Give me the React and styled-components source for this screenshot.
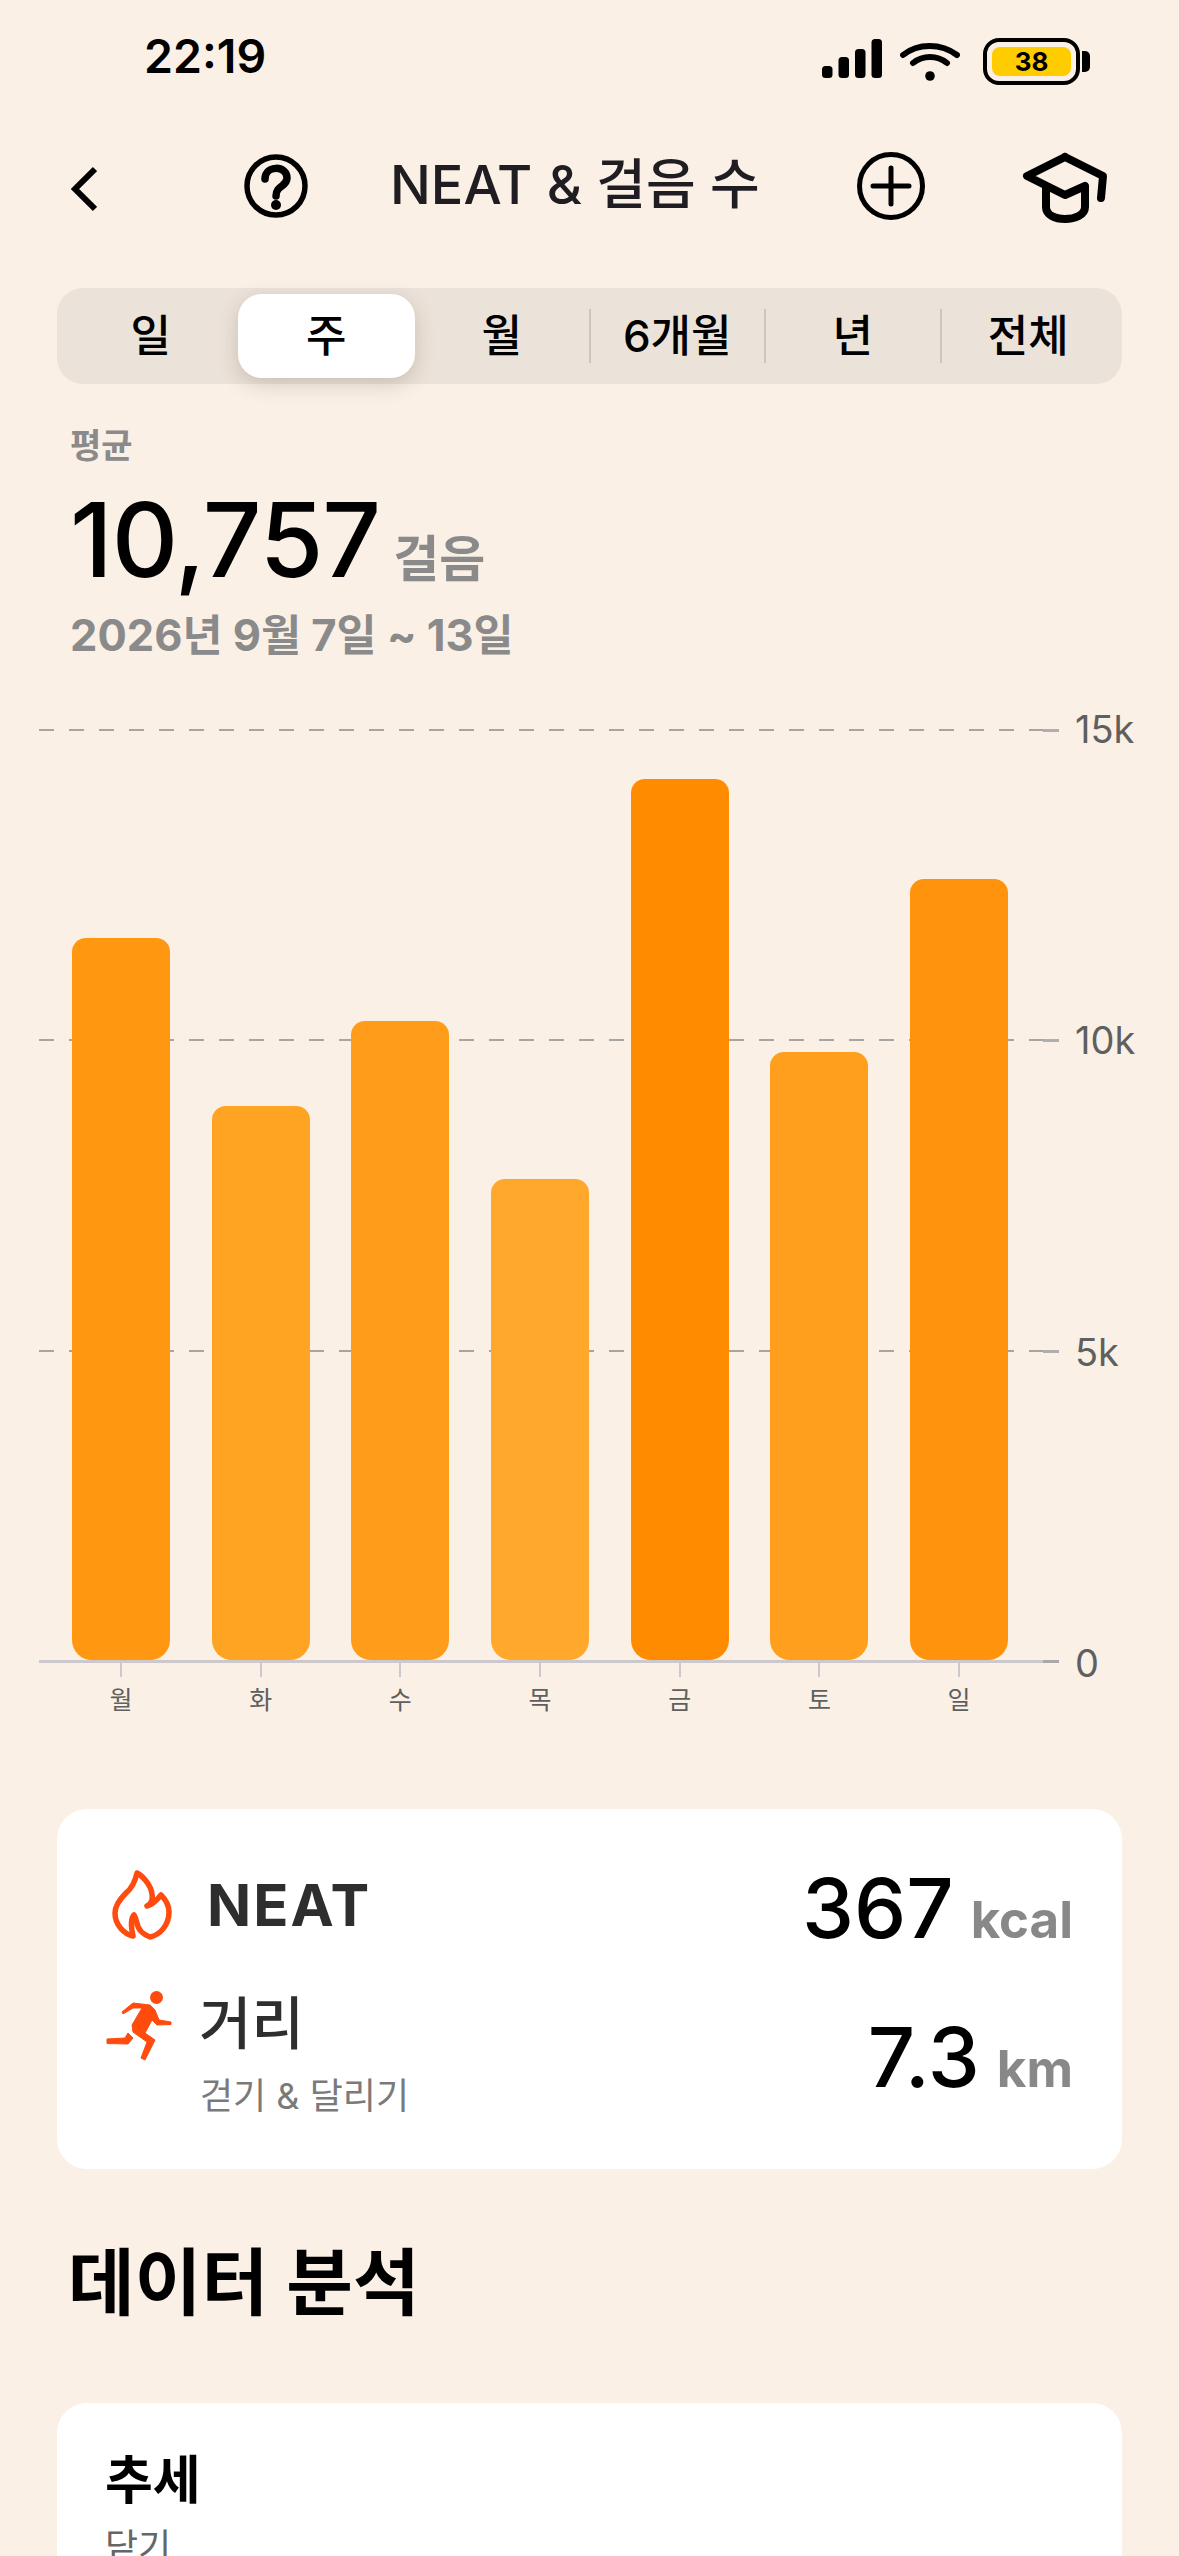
import React from 'react';
import styled, { createGlobalStyle } from 'styled-components';

const GlobalStyle = createGlobalStyle`
    html, body {
        margin: 0;
        padding: 0;
        background: #faf0e6;
    }
    * {
        box-sizing: border-box;
    }
`;

const tabs = ['일', '주', '월', '6개월', '년', '전체'];
const yLabels = ['15k', '10k', '5k', '0'];
const steps = [
    { day: '월', value: 11633 },
    { day: '화', value: 8926 },
    { day: '수', value: 10295 },
    { day: '목', value: 7750 },
    { day: '금', value: 14195 },
    { day: '토', value: 9796 },
    { day: '일', value: 12583 },
];

// 값이 클수록 진한 주황색
function barColor(value) {
    const t = (value - 7750) / (14195 - 7750);
    return `rgb(255, ${Math.round(168 - t * 28)}, ${Math.round(43 - t * 43)})`;
}

function App() {
    return (
        <Page>
            <GlobalStyle />
            <StatusBar>
                <Clock>22:19</Clock>
                <StatusIcons>
                    <svg width="60" height="40" viewBox="0 0 60 40">
                        <rect x="0" y="27" width="10.5" height="12" rx="3.5" fill="#000" />
                        <rect x="16.5" y="18" width="10.5" height="21" rx="3.5" fill="#000" />
                        <rect x="33" y="10" width="10.5" height="29" rx="3.5" fill="#000" />
                        <rect x="49.5" y="0" width="10.5" height="39" rx="3.5" fill="#000" />
                    </svg>
                    <svg width="60" height="40" viewBox="0 0 60 40">
                        <path d="M3 13 C18 1 41 1 57 13" fill="none" stroke="#000" strokeWidth="6" strokeLinecap="round" />
                        <path d="M13 21 C23 13 37 13 47 21" fill="none" stroke="#000" strokeWidth="6" strokeLinecap="round" />
                        <circle cx="30" cy="34" r="4.8" fill="#000" />
                    </svg>
                    <Battery>
                        <BatteryFill>38</BatteryFill>
                        <BatteryCap />
                    </Battery>
                </StatusIcons>
            </StatusBar>

            <NavBar>
                <BackIcon width="26" height="46" viewBox="0 0 26 46">
                    <path d="M24 3 L4 23 L24 43" fill="none" stroke="#000" strokeWidth="6" />
                </BackIcon>
                <HelpIcon width="64" height="64" viewBox="0 0 64 64">
                    <circle cx="32" cy="32" r="29" fill="none" stroke="#000" strokeWidth="5.5" />
                    <path d="M21 25 C21 11 43 11 43 24 C43 33 32 31 32 42" fill="none" stroke="#000" strokeWidth="7.5" strokeLinecap="round" />
                    <circle cx="32" cy="51" r="5" fill="#000" />
                </HelpIcon>
                <NavTitle>NEAT &amp; 걸음 수</NavTitle>
                <PlusIcon width="68" height="68" viewBox="0 0 68 68">
                    <circle cx="34" cy="34" r="31.5" fill="none" stroke="#000" strokeWidth="5" />
                    <path d="M16 34 H52 M34 16 V52" fill="none" stroke="#000" strokeWidth="5" strokeLinecap="round" />
                </PlusIcon>
                <CapIcon width="100" height="90" viewBox="0 0 100 90">
                    <path
                        d="M50 14 L12 33 L50 52 L70 43 V64 C70 72 60 76 50 76 C40 76 31 72 31 64 V45 M50 14 L88 33 L86 55"
                        fill="none"
                        stroke="#000"
                        strokeWidth="8"
                        strokeLinecap="round"
                        strokeLinejoin="round"
                    />
                </CapIcon>
            </NavBar>

            <Segments>
                {tabs.map((tab, idx) => (
                    <Segment key={tab} $active={idx === 1} $divider={idx >= 3}>{tab}</Segment>
                ))}
            </Segments>

            <Summary>
                <SummaryLabel>평균</SummaryLabel>
                <SummaryValue>
                    <BigNumber>10,757</BigNumber>
                    <BigUnit>걸음</BigUnit>
                </SummaryValue>
                <DateRange>2026년 9월 7일 ~ 13일</DateRange>
            </Summary>

            <Chart>
                <Plot>
                    <GridLayer>
                        <GridRow><DashLine /><AxisTick /></GridRow>
                        <GridRow><DashLine /><AxisTick /></GridRow>
                        <GridRow><DashLine /><AxisTick /></GridRow>
                    </GridLayer>
                    <Bars>
                        {steps.map(el => (
                            <Bar
                                key={el.day}
                                style={{
                                    height: `${(el.value / 15000) * 931}px`,
                                    background: barColor(el.value),
                                }}
                            />
                        ))}
                    </Bars>
                    <BaseEnd />
                </Plot>
                <YAxis>
                    {yLabels.map(el => <YLabel key={el}>{el}</YLabel>)}
                </YAxis>
                <XAxis>
                    {steps.map(el => (
                        <XItem key={el.day}>
                            <XTick />
                            <XLabel>{el.day}</XLabel>
                        </XItem>
                    ))}
                </XAxis>
            </Chart>

            <Card>
                <MetricRow>
                    <svg width="80" height="90" viewBox="0 0 80 90">
                        <path
                            d="M37 13 C44 17 54 28 52 40 C51 43 49 45 47 46 C52 45 57 40 61 35 C66 40 69 45 69 52 C69 65 60 75 50 77 C44 75 38 70 37 63 C36 60 35 56 34 55 C32 57 30 62 33 76 C24 74 15 65 15 53 C15 45 20 39 26 33 C31 29 35 22 37 13 Z"
                            fill="none"
                            stroke="#ff4b0e"
                            strokeWidth="5.5"
                            strokeLinejoin="round"
                        />
                    </svg>
                    <NeatName>NEAT</NeatName>
                    <MetricValue $top={5}>
                        <MetricNumber>367</MetricNumber>
                        <MetricUnit>kcal</MetricUnit>
                    </MetricValue>
                </MetricRow>
                <DistanceRow>
                    <svg width="80" height="80" viewBox="0 125 80 80">
                        <circle cx="56.5" cy="137.5" r="6.5" fill="#ff4b0e" />
                        <path
                            d="M22 152 L33 143 L50 145 L55 150 L59 160 L71 162 L71 164.5 L57 165 L52 160 L45 173 L55 180 L45 200 L41 198 L47 182 L33 172 L32 165 L42 148 L33 148 L23 154 Z"
                            fill="#ff4b0e"
                            stroke="#ff4b0e"
                            strokeWidth="1"
                            strokeLinejoin="round"
                        />
                        <path d="M28 173 L33 178 L28 184 L7 183.5 L7 179 L25 178 Z" fill="#ff4b0e" stroke="#ff4b0e" strokeWidth="1" strokeLinejoin="round" />
                    </svg>
                    <DistanceText>
                        <DistanceName>거리</DistanceName>
                        <DistanceSub>걷기 &amp; 달리기</DistanceSub>
                    </DistanceText>
                    <MetricValue $top={24}>
                        <MetricNumber>7.3</MetricNumber>
                        <MetricUnit>km</MetricUnit>
                    </MetricValue>
                </DistanceRow>
            </Card>

            <SectionTitle>데이터 분석</SectionTitle>

            <TrendCard>
                <TrendTitle>추세</TrendTitle>
                <TrendToggle>닫기</TrendToggle>
            </TrendCard>
        </Page>
    );
}

const fontStack = `Inter, "Noto Sans CJK KR", sans-serif`;

const Page = styled.div`
    width: 1179px;
    height: 2556px;
    overflow: hidden;
    background: #faf0e6;
    font-family: ${fontStack};
    color: #000;
`;

const StatusBar = styled.div`
    display: flex;
    justify-content: space-between;
    height: 150px;
    padding: 38px 99px 0 144px;
`;

const Clock = styled.div`
    font-size: 46.5px;
    line-height: 36px;
    font-weight: 600;
`;

const StatusIcons = styled.div`
    display: flex;
    align-items: flex-start;
    gap: 18px;
    padding-top: 1px;

    svg:nth-child(2) {
        margin-top: 3px;
    }
`;

const Battery = styled.div`
    position: relative;
    width: 97px;
    height: 47px;
    margin: -1px 0 0 5px;
    padding: 5px;
    border: 4px solid #000;
    border-radius: 16px;
`;

const BatteryFill = styled.div`
    display: flex;
    align-items: center;
    justify-content: center;
    height: 29px;
    background: #ffcc00;
    border-radius: 8px;
    font-size: 26px;
    font-weight: 700;
`;

const BatteryCap = styled.div`
    position: absolute;
    top: 9px;
    right: -14px;
    width: 8px;
    height: 21px;
    background: #000;
    border-radius: 0 5px 5px 0;
`;

const NavBar = styled.div`
    display: flex;
    align-items: center;
    height: 72px;
    padding-left: 71px;
`;

const BackIcon = styled.svg`
    margin-top: 6px;
`;

const HelpIcon = styled.svg`
    margin-left: 147px;
`;

const NavTitle = styled.div`
    width: 366px;
    margin: -2px 0 0 82px;
    font-size: 54px;
    line-height: 72px;
    font-weight: 500;
    color: #1f1c22;
    white-space: nowrap;
`;

const PlusIcon = styled.svg`
    margin-left: 101px;
`;

const CapIcon = styled.svg`
    margin-left: 90px;
    margin-top: 4px;
`;

const Segments = styled.div`
    display: grid;
    grid-template-columns: repeat(6, 1fr);
    height: 96px;
    margin: 66px 57px 0;
    padding: 6px;
    background: #ebe2d9;
    border-radius: 26px;
`;

const Segment = styled.div`
    position: relative;
    display: flex;
    align-items: center;
    justify-content: center;
    margin: ${props => (props.$active ? '0 -1px' : '0')};
    padding-bottom: 6px;
    font-size: 44px;
    font-weight: 500;
    background: ${props => (props.$active ? '#fff' : 'transparent')};
    border-radius: 24px;
    box-shadow: ${props => (props.$active ? '0 6px 20px rgba(90, 70, 50, 0.22)' : 'none')};

    &::before {
        content: '';
        display: ${props => (props.$divider ? 'block' : 'none')};
        position: absolute;
        left: -1px;
        top: 15px;
        width: 2px;
        height: 54px;
        background: #c9c6c2;
    }
`;

const Summary = styled.div`
    display: flex;
    flex-direction: column;
    height: 345px;
    padding: 42px 0 0 70px;
`;

const SummaryLabel = styled.div`
    font-size: 34px;
    line-height: 40px;
    font-weight: 700;
    color: #8a8a8a;
`;

const SummaryValue = styled.div`
    display: flex;
    align-items: baseline;
    gap: 13px;
    margin-top: 13px;
`;

const BigNumber = styled.span`
    font-size: 103px;
    line-height: 122px;
    font-weight: 500;
    letter-spacing: -1px;
`;

const BigUnit = styled.span`
    font-size: 50px;
    font-weight: 700;
    color: #8a8a8a;
`;

const DateRange = styled.div`
    margin-top: 7px;
    font-size: 43.5px;
    line-height: 54px;
    font-weight: 700;
    color: #8a8a8a;
`;

const Chart = styled.div`
    display: grid;
    grid-template-columns: 1020px 1fr;
    padding-left: 39px;
`;

const Plot = styled.div`
    position: relative;
    display: flex;
    align-items: flex-end;
    height: 934px;
    border-bottom: 3px solid #cdc8cc;
`;

const GridLayer = styled.div`
    position: absolute;
    inset: 0;
    display: flex;
    flex-direction: column;
`;

const GridRow = styled.div`
    display: flex;
    height: 311px;
`;

const DashLine = styled.div`
    flex: 1;
    height: 2px;
    background: repeating-linear-gradient(to right, #a8a4a0 0 15px, transparent 15px 30px);
`;

const AxisTick = styled.div`
    width: 16px;
    height: 3px;
    background: #b0aeb0;
`;

const Bars = styled.div`
    position: relative;
    display: flex;
    align-items: flex-end;
    gap: 41.7px;
    padding-left: 33px;
`;

const Bar = styled.div`
    width: 98px;
    border-radius: 14px 14px 20px 20px;
`;

const BaseEnd = styled.div`
    position: absolute;
    right: 0;
    bottom: -3px;
    width: 16px;
    height: 3px;
    background: #aaa8a8;
`;

const YAxis = styled.div`
    display: flex;
    flex-direction: column;
    justify-content: space-between;
    height: 934px;
    padding-left: 16px;
`;

const YLabel = styled.div`
    display: flex;
    align-items: center;
    height: 0;
    font-size: 38px;
    color: #5f5f5f;
`;

const XAxis = styled.div`
    display: flex;
    gap: 41.7px;
    padding-left: 33px;
    height: 146px;
`;

const XItem = styled.div`
    display: flex;
    flex-direction: column;
    align-items: center;
    width: 98px;
`;

const XTick = styled.div`
    width: 2px;
    height: 14px;
    background: #cdc8cc;
`;

const XLabel = styled.div`
    margin-top: 7px;
    font-size: 25px;
    line-height: 32px;
    color: #5f5f5f;
`;

const Card = styled.div`
    height: 360px;
    margin: 0 57px;
    padding: 51px 49px 0 43px;
    background: #fff;
    border-radius: 30px;
`;

const MetricRow = styled.div`
    display: flex;
    align-items: center;
    height: 90px;
`;

const NeatName = styled.div`
    margin-left: 27px;
    font-size: 58px;
    font-weight: 700;
    letter-spacing: 2px;
    color: #2e2e2e;
`;

const MetricValue = styled.div`
    display: flex;
    align-items: baseline;
    gap: 17px;
    margin-left: auto;
    padding-top: ${props => props.$top}px;
`;

const MetricNumber = styled.span`
    font-size: 83px;
    line-height: 96px;
    font-weight: 500;
`;

const MetricUnit = styled.span`
    font-size: 51px;
    font-weight: 700;
    color: #888;
`;

const DistanceRow = styled.div`
    display: flex;
    align-items: flex-start;
    margin-top: 35px;
`;

const DistanceText = styled.div`
    display: flex;
    flex-direction: column;
    margin-left: 19px;
`;

const DistanceName = styled.div`
    margin-top: 1px;
    font-size: 57px;
    line-height: 76px;
    font-weight: 500;
    color: #2e2e2e;
`;

const DistanceSub = styled.div`
    margin: 12px 0 0 1px;
    font-size: 36px;
    line-height: 44px;
    color: #7a7a7a;
`;

const SectionTitle = styled.h2`
    margin: 0;
    padding: 64px 0 0 68px;
    height: 234px;
    font-size: 72.5px;
    line-height: 100px;
    font-weight: 600;
`;

const TrendCard = styled.div`
    height: 400px;
    margin: 0 57px;
    padding: 45px 48px;
    background: #fff;
    border-radius: 30px;
`;

const TrendTitle = styled.div`
    font-size: 52px;
    line-height: 66px;
    font-weight: 600;
`;

const TrendToggle = styled.div`
    margin-top: 9px;
    font-size: 36px;
    line-height: 48px;
    color: #666;
`;

export default App;
